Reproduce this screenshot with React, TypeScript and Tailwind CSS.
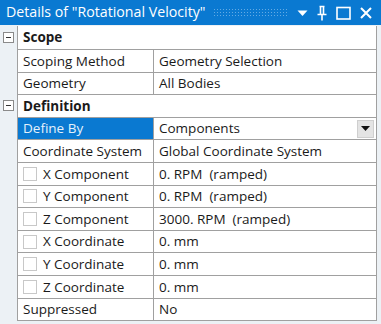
import React from "react";

const font = { fontFamily: '"Open Sans", "Noto Sans", sans-serif' };

function Minus() {
  return (
    <div className="w-[11px] h-[11px] border border-[#8a8a8a] bg-white flex items-center justify-center">
      <div className="w-[5px] h-px bg-[#333]" />
    </div>
  );
}

function Check() {
  return <div className="w-[14px] h-[14px] border border-[#c8c8c8] bg-white shrink-0" />;
}

type Row =
  | { kind: "header"; label: string }
  | { kind: "row"; label: string; value: string; check?: boolean; selected?: boolean; dropdown?: boolean };

const rows: Row[] = [
  { kind: "header", label: "Scope" },
  { kind: "row", label: "Scoping Method", value: "Geometry Selection" },
  { kind: "row", label: "Geometry", value: "All Bodies" },
  { kind: "header", label: "Definition" },
  { kind: "row", label: "Define By", value: "Components", selected: true, dropdown: true },
  { kind: "row", label: "Coordinate System", value: "Global Coordinate System" },
  { kind: "row", label: "X Component", value: "0. RPM  (ramped)", check: true },
  { kind: "row", label: "Y Component", value: "0. RPM  (ramped)", check: true },
  { kind: "row", label: "Z Component", value: "3000. RPM  (ramped)", check: true },
  { kind: "row", label: "X Coordinate", value: "0. mm", check: true },
  { kind: "row", label: "Y Coordinate", value: "0. mm", check: true },
  { kind: "row", label: "Z Coordinate", value: "0. mm", check: true },
  { kind: "row", label: "Suppressed", value: "No" },
];

export default function App() {
  return (
    <div className="w-[381px] h-[324px] bg-[#ecf1f5] overflow-hidden text-[13.5px] text-[#1a1a1a]" style={font}>
      <div className="h-[25px] bg-[#0a79d1] flex items-center pl-[6px] pr-[8px] text-white">
        <span className="text-[14.2px] leading-none whitespace-nowrap">Details of "Rotational Velocity"</span>
        <div
          className="flex-1 h-[9px] mx-[8px] opacity-60"
          style={{
            backgroundImage: "radial-gradient(#9fcaf0 0.7px, transparent 0.8px)",
            backgroundSize: "3px 3px",
          }}
        />
        <div className="flex items-center gap-[8px]">
          <svg width="11" height="8" viewBox="0 0 11 8"><path d="M0.5 1.5 L10.5 1.5 L5.5 7 Z" fill="white" /></svg>
          <svg width="12" height="16" viewBox="0 0 12 16" fill="none" stroke="white" strokeWidth="1.6">
            <path d="M3.5 1.5 H8.5 M4.5 1.5 V9 M7.5 1.5 V9 M1.5 9.5 H10.5 M6 10 V15.5" />
          </svg>
          <svg width="15" height="14" viewBox="0 0 15 14" fill="none" stroke="white" strokeWidth="1.6">
            <rect x="1" y="1.5" width="13" height="11.5" />
          </svg>
          <svg width="14" height="14" viewBox="0 0 14 14" fill="none" stroke="white" strokeWidth="2">
            <path d="M2 2 L12 12 M12 2 L2 12" />
          </svg>
        </div>
      </div>
      <div className="flex pt-[1px]">
        <div className="w-[17px] shrink-0 flex flex-col">
          {rows.map((r, i) => (
            <div key={i} className={`${i === 0 ? "h-[23px]" : "h-[22.6px]"} flex items-center pl-[3px]`}>
              {r.kind === "header" ? <Minus /> : null}
            </div>
          ))}
        </div>
        <div className="w-[360px] border-l border-r border-b border-[#a0a0a0] bg-white flex flex-col">
          {rows.map((r, i) => {
            const h = i === 0 ? "h-[23px]" : "h-[22.6px]";
            const bt = i === 0 ? "" : "border-t border-[#a0a0a0]";
            if (r.kind === "header") {
              return (
                <div key={i} className={`${h} ${bt} flex items-center pl-[5px] font-bold`}>
                  {r.label}
                </div>
              );
            }
            return (
              <div key={i} className={`${h} ${bt} flex`}>
                <div
                  className={`w-[136px] shrink-0 border-r border-[#a0a0a0] flex items-center gap-[6px] ${
                    r.check ? "pl-[5px]" : "pl-[5px]"
                  } ${r.selected ? "bg-[#0a79d1] text-[#e4f1fc]" : ""}`}
                >
                  {r.check ? <Check /> : null}
                  <span className="whitespace-nowrap">{r.label}</span>
                </div>
                <div className="flex-1 flex items-center pl-[5px] whitespace-pre">
                  <span className="flex-1">{r.value}</span>
                  {r.dropdown ? (
                    <div className="w-[17px] h-[18px] mr-[2px] bg-[#e4e4e4] border border-[#cfcfcf] flex items-center justify-center">
                      <svg width="9" height="5" viewBox="0 0 9 5"><path d="M0 0 H9 L4.5 5 Z" fill="#111" /></svg>
                    </div>
                  ) : null}
                </div>
              </div>
            );
          })}
        </div>
      </div>
    </div>
  );
}
